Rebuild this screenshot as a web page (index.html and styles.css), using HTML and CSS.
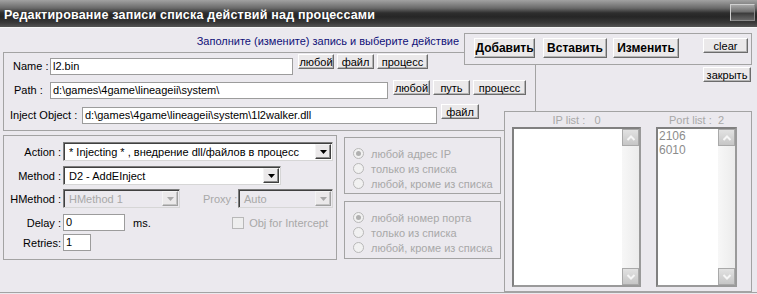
FILE: index.html
```html
<!DOCTYPE html>
<html>

<head>
    <link rel="stylesheet" href="styles.css">
</head>

<body>
    <div class="window">
        <div class="titlebar">
            <span class="title">Редактирование записи списка действий над процессами</span>
            <span class="close-btn"></span>
        </div>

        <div class="client">
            <div class="hint">Заполните (измените) запись и выберите действие</div>

            <div class="box paths">
                <div class="row row-name">
                    <label class="lbl lbl-name">Name :</label>
                    <div class="edit edit-name">l2.bin</div>
                    <div class="btns">
                        <button class="btn w-36">любой</button>
                        <button class="btn w-37">файл</button>
                        <button class="btn w-51">процесс</button>
                    </div>
                </div>
                <div class="row row-path">
                    <label class="lbl lbl-path">Path :</label>
                    <div class="edit edit-path">d:\games\4game\lineageii\system\</div>
                    <div class="btns">
                        <button class="btn w-37">любой</button>
                        <button class="btn w-37">путь</button>
                        <button class="btn w-53">процесс</button>
                    </div>
                </div>
                <div class="row row-inject">
                    <label class="lbl lbl-inject">Inject Object :</label>
                    <div class="edit edit-inject">d:\games\4game\lineageii\system\1l2walker.dll</div>
                    <div class="btns">
                        <button class="btn w-38">файл</button>
                    </div>
                </div>
            </div>

            <div class="lower">
                <div class="box action">
                    <div class="arow">
                        <label class="alabel">Action :</label>
                        <div class="combo combo-action">
                            <span class="combo-text">* Injecting * , внедрение dll/файлов в процесс</span>
                            <span class="combo-btn"><svg width="7" height="4" viewBox="0 0 7 4"><polygon points="0,0 7,0 3.5,4" fill="#000"/></svg></span>
                        </div>
                    </div>
                    <div class="arow arow-method">
                        <label class="alabel">Method :</label>
                        <div class="combo combo-method">
                            <span class="combo-text">D2 - AddEInject</span>
                            <span class="combo-btn"><svg width="7" height="4" viewBox="0 0 7 4"><polygon points="0,0 7,0 3.5,4" fill="#000"/></svg></span>
                        </div>
                    </div>
                    <div class="arow arow-hmethod">
                        <label class="alabel">HMethod :</label>
                        <div class="combo combo-hmethod disabled">
                            <span class="combo-text">HMethod 1</span>
                            <span class="combo-btn"><svg width="7" height="4" viewBox="0 0 7 4"><polygon points="0,0 7,0 3.5,4" fill="#a8a8a8"/></svg></span>
                        </div>
                        <label class="proxy-label">Proxy :</label>
                        <div class="combo combo-proxy disabled">
                            <span class="combo-text">Auto</span>
                            <span class="combo-btn"><svg width="7" height="4" viewBox="0 0 7 4"><polygon points="0,0 7,0 3.5,4" fill="#a8a8a8"/></svg></span>
                        </div>
                    </div>
                    <div class="arow arow-delay">
                        <label class="alabel">Delay :</label>
                        <div class="edit edit-delay">0</div>
                        <span class="unit">ms.</span>
                        <div class="check">
                            <span class="check-box"></span>
                            <span class="check-text">Obj for Intercept</span>
                        </div>
                    </div>
                    <div class="arow arow-retries">
                        <label class="alabel">Retries:</label>
                        <div class="edit edit-retries">1</div>
                    </div>
                </div>

                <div class="radio-col">
                    <div class="box radio-box">
                        <div class="radio"><span class="dot checked"></span>любой адрес IP</div>
                        <div class="radio"><span class="dot"></span>только из списка</div>
                        <div class="radio"><span class="dot"></span>любой, кроме из списка</div>
                    </div>
                    <div class="box radio-box radio-box-port">
                        <div class="radio"><span class="dot checked"></span>любой номер порта</div>
                        <div class="radio"><span class="dot"></span>только из списка</div>
                        <div class="radio"><span class="dot"></span>любой, кроме из списка</div>
                    </div>
                </div>
            </div>

            <!-- right side sits over the top-left group box -->
            <div class="side">
                <div class="box actions">
                    <button class="btn big w-61">Добавить</button>
                    <button class="btn big w-64">Вставить</button>
                    <button class="btn big w-66">Изменить</button>
                    <button class="btn btn-clear">clear</button>
                </div>
                <button class="btn btn-close">закрыть</button>
            </div>

            <div class="box lists">
                <div class="list-col">
                    <div class="list-title">IP list :&nbsp;&nbsp; 0</div>
                    <div class="listbox list-ip">
                        <div class="items"></div>
                        <div class="scroll">
                            <span class="arrow"><svg width="14" height="14" viewBox="0 0 14 14"><polyline points="3.5,9 7,5.5 10.5,9" fill="none" stroke="#f6f6f6" stroke-width="2"/></svg></span>
                            <span class="track"></span>
                            <span class="arrow"><svg width="14" height="14" viewBox="0 0 14 14"><polyline points="3.5,5 7,8.5 10.5,5" fill="none" stroke="#f6f6f6" stroke-width="2"/></svg></span>
                        </div>
                    </div>
                </div>
                <div class="list-col">
                    <div class="list-title">Port list :&nbsp; 2</div>
                    <div class="listbox list-port">
                        <div class="items">
                            <div>2106</div>
                            <div>6010</div>
                        </div>
                        <div class="scroll">
                            <span class="arrow"><svg width="14" height="14" viewBox="0 0 14 14"><polyline points="3.5,9 7,5.5 10.5,9" fill="none" stroke="#f6f6f6" stroke-width="2"/></svg></span>
                            <span class="track"></span>
                            <span class="arrow"><svg width="14" height="14" viewBox="0 0 14 14"><polyline points="3.5,5 7,8.5 10.5,5" fill="none" stroke="#f6f6f6" stroke-width="2"/></svg></span>
                        </div>
                    </div>
                </div>
            </div>
        </div>
    </div>
</body>

</html>
```

FILE: styles.css
```css
* {
    box-sizing: border-box;
}

body {
    margin: 0;
    font-family: "Liberation Sans", Arial, sans-serif;
    font-size: 11px;
    color: #000;
}

.window {
    width: 757px;
    height: 294px;
    background: #ebe9ee;
    overflow: hidden;
}

.titlebar {
    height: 28px;
    display: flex;
    align-items: center;
    justify-content: space-between;
    padding: 0 2px 0 4px;
    background: linear-gradient(#a2a2a2 0, #6a6a6a 30%, #2e2e2e 48%, #262626 62%, #3a3a3a 85%, #555 100%);
    border-bottom: 1px solid #f6f6f6;
}

.title {
    color: #fff;
    font-weight: bold;
    font-size: 12.5px;
    letter-spacing: 0.2px;
    margin-top: 2px;
}

.close-btn {
    width: 25px;
    height: 17px;
    margin-top: -2px;
    border: 1px solid #d0d0d0;
    border-right-color: #8a8a8a;
    border-bottom-color: #8a8a8a;
    background: linear-gradient(#a8a8a8, #6e6e6e 45%, #3c3c3c 55%, #666);
}

.client {
    position: relative;
    height: 265px;
    padding-top: 7px;
    border-bottom: 1px solid #a3a3a3;
}

.hint {
    width: 456px;
    margin-left: 3px;
    line-height: 13px;
    text-align: right;
    color: #101078;
}

.box {
    border: 1px solid #a3a3a3;
}

.paths {
    width: 533px;
    height: 79px;
    margin: 4px 0 0 3px;
    padding-top: 1px;
}

.row {
    display: flex;
    align-items: flex-start;
}

.row-name {
    height: 21px;
}

.row-path {
    margin-top: 5px;
    height: 19px;
}

.row-inject {
    margin-top: 5px;
}

.lbl {
    line-height: 17px;
    white-space: nowrap;
}

.lbl-name {
    margin: 4px 0 0 9px;
    width: 37px;
}

.lbl-path {
    margin: 2px 0 0 10px;
    width: 36px;
}

.lbl-inject {
    margin: 3px 0 0 6px;
    width: 72px;
}

.edit {
    height: 17px;
    line-height: 15px;
    padding-left: 2px;
    background: #fff;
    border: 1px solid #9c9c9c;
    white-space: nowrap;
    overflow: hidden;
}

.edit-name {
    width: 243px;
    margin-top: 4px;
}

.edit-path {
    width: 338px;
    margin-top: 2px;
}

.edit-inject {
    width: 355px;
    margin-top: 3px;
}

.btns {
    display: flex;
    gap: 3px;
    margin-left: 5px;
}

.row-inject .btns {
    margin-left: 4px;
}

.btn {
    height: 15px;
    padding: 0;
    font-family: "Liberation Sans", Arial, sans-serif;
    font-size: 11px;
    line-height: 12px;
    color: #000;
    background: #ebe9ea;
    border: 1px solid;
    border-color: #fff #6c6c6c #6c6c6c #fff;
    box-shadow: inset -1px -1px 0 #b4b4b4;
    text-align: center;
}

.w-36 { width: 36px; }
.w-37 { width: 37px; }
.w-38 { width: 38px; }
.w-51 { width: 51px; }
.w-53 { width: 53px; }
.w-61 { width: 61px; }
.w-64 { width: 64px; }
.w-66 { width: 66px; }

.btn.big {
    height: 20px;
    font-size: 12px;
    font-weight: bold;
    line-height: 17px;
}

.lower {
    display: flex;
    align-items: flex-start;
    margin: 4px 0 0 3px;
}

.action {
    width: 334px;
    height: 125px;
    padding-top: 6px;
}

.arow {
    display: flex;
    align-items: center;
}

.arow-method {
    margin-top: 5px;
}

.arow-hmethod {
    margin-top: 4px;
}

.arow-delay {
    margin-top: 6px;
}

.arow-retries {
    margin-top: 3px;
}

.alabel {
    width: 57px;
    margin-right: 2px;
    text-align: right;
    white-space: nowrap;
}

.combo {
    display: flex;
    align-items: center;
    height: 19px;
    background: #fff;
    border: 1px solid;
    border-color: #7c7c7c #d6d6d6 #d6d6d6 #7c7c7c;
    box-shadow: inset 1px 1px 0 #404040;
    padding: 1px 1px 1px 3px;
}

.combo-text {
    flex: 1;
    white-space: nowrap;
    overflow: hidden;
    padding-left: 2px;
}

.combo-btn {
    width: 16px;
    height: 15px;
    display: flex;
    align-items: center;
    justify-content: center;
    background: #ebe9ea;
    border: 1px solid;
    border-color: #f4f4f4 #404040 #404040 #f4f4f4;
    box-shadow: inset -1px -1px 0 #8c8c8c;
}

.combo.disabled {
    background: #ebe9ee;
}

.combo.disabled .combo-text {
    color: #a8a8a8;
}

.combo.disabled .combo-btn {
    border-color: #f4f4f4 #a0a0a0 #a0a0a0 #f4f4f4;
    box-shadow: inset -1px -1px 0 #c4c4c4;
}

.combo-action {
    width: 270px;
}

.combo-method {
    width: 218px;
}

.combo-hmethod {
    width: 117px;
}

.proxy-label {
    width: 35px;
    margin-left: 23px;
    color: #a8a8a8;
    white-space: nowrap;
}

.combo-proxy {
    width: 95px;
}

.edit-delay {
    width: 62px;
}

.unit {
    margin-left: 8px;
}

.check {
    display: flex;
    align-items: center;
    margin-left: auto;
    margin-right: 8px;
    color: #a8a8a8;
}

.check-box {
    width: 12px;
    height: 12px;
    margin-right: 5px;
    border: 1px solid #b8b8b8;
    background: #eeeeee;
}

.edit-retries {
    width: 28px;
}

.radio-col {
    width: 157px;
    margin: 2px 0 0 7px;
}

.radio-box {
    height: 57px;
    padding: 8px 0 0 8px;
}

.radio-box-port {
    height: 58px;
    margin-top: 7px;
}

.radio {
    display: flex;
    align-items: center;
    height: 15px;
    color: #a8a8a8;
    white-space: nowrap;
}

.dot {
    width: 11px;
    height: 11px;
    margin-right: 7px;
    border: 1px solid #b8b8b8;
    border-radius: 50%;
    background: #f1f1f1;
    display: flex;
    align-items: center;
    justify-content: center;
}

.dot.checked::after {
    content: "";
    width: 5px;
    height: 5px;
    border-radius: 50%;
    background: #b0b0b0;
}

.side {
    position: absolute;
    left: 464px;
    top: 5px;
    width: 288px;
    display: flex;
    flex-direction: column;
    align-items: flex-end;
}

.actions {
    width: 288px;
    height: 32px;
    display: flex;
    align-items: flex-start;
    padding: 4px 3px 0 9px;
    background: #ebe9ee;
}

.actions .w-64 {
    margin-left: 8px;
}

.actions .w-66 {
    margin-left: 6px;
}

.btn-clear {
    width: 45px;
    margin-left: auto;
}

.btn-close {
    width: 48px;
    margin-top: 2px;
    margin-right: 1px;
}

.lists {
    position: absolute;
    left: 504px;
    top: 83px;
    width: 248px;
    height: 181px;
    display: flex;
    gap: 15px;
    padding: 2px 0 0 7px;
    background: #ebe9ee;
}

.list-title {
    line-height: 13px;
    text-align: center;
    color: #a8a8a8;
    white-space: nowrap;
}

.listbox {
    display: flex;
    height: 160px;
    background: #fff;
    border: 2px solid;
    border-color: #808080 #9a9a9a #9a9a9a #808080;
}

.list-ip {
    width: 129px;
}

.list-port {
    width: 81px;
}

.items {
    flex: 1;
    padding-left: 1px;
    line-height: 14px;
    font-size: 12px;
    color: #8c8c8c;
}

.scroll {
    width: 17px;
    display: flex;
    flex-direction: column;
    background: linear-gradient(90deg, #f7f7f7, #ececec);
}

.arrow {
    width: 17px;
    height: 17px;
    display: flex;
    align-items: center;
    justify-content: center;
    border: 1px solid #a9a9a9;
    background: linear-gradient(#e2e2e2, #c6c6c6);
}

.track {
    flex: 1;
}
```
